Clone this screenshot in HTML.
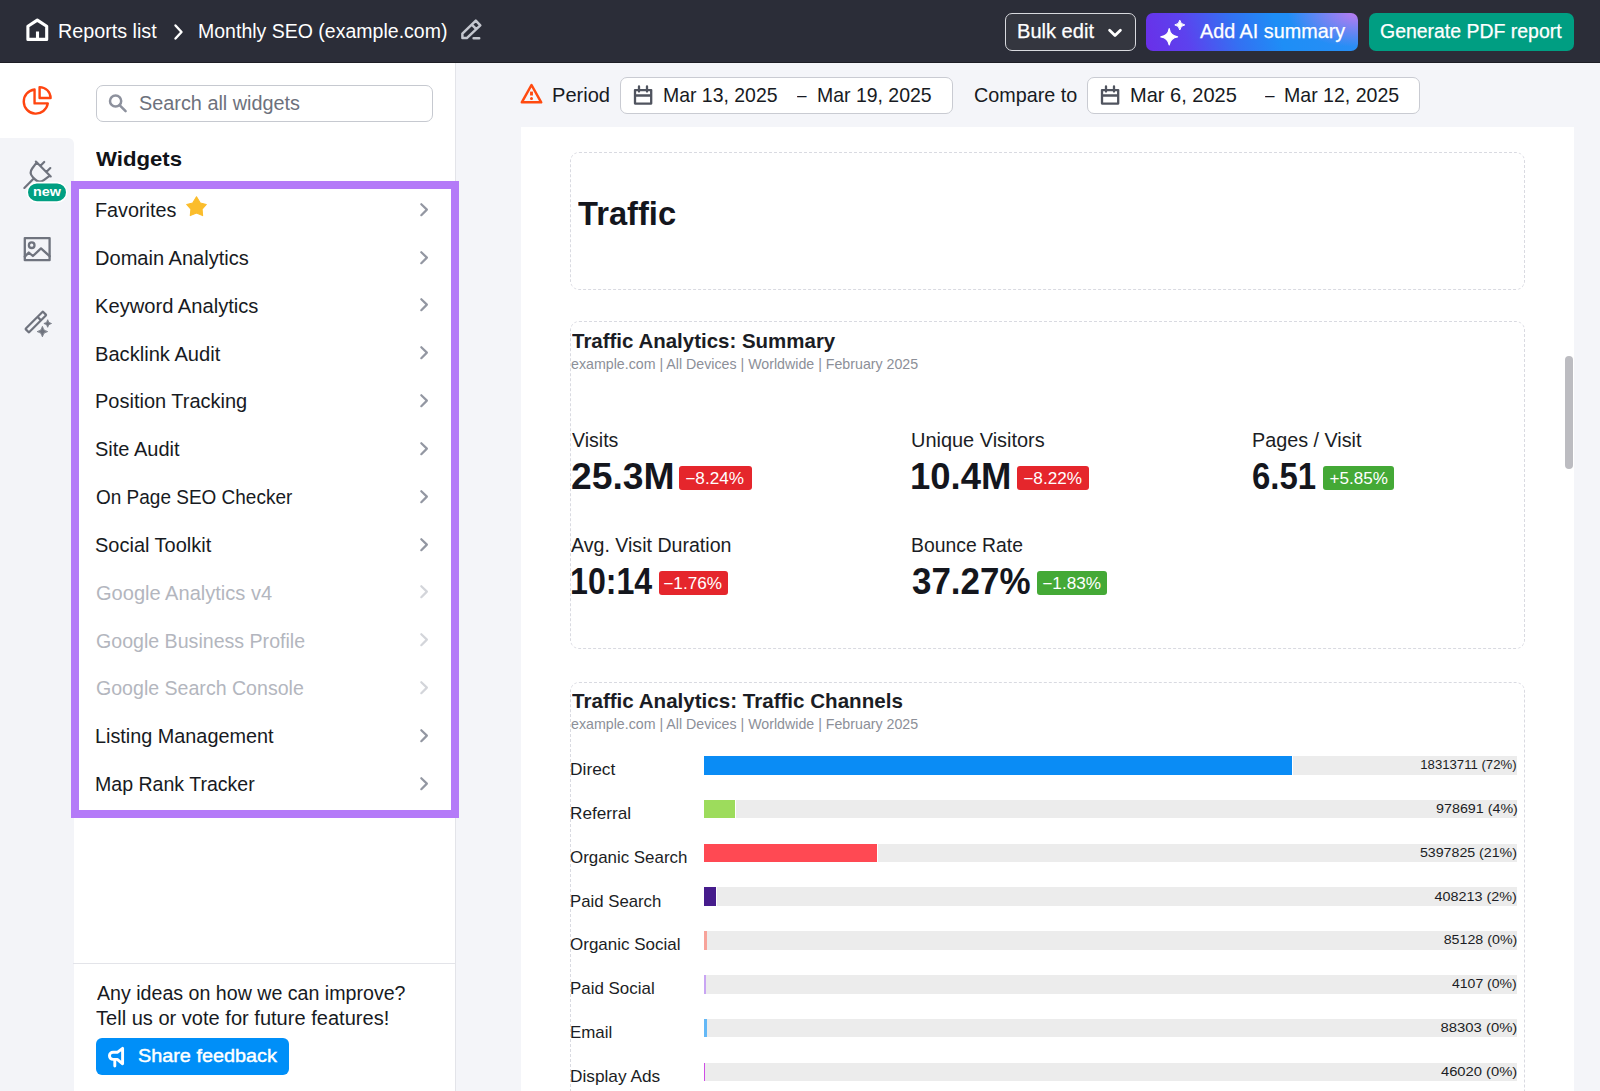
<!DOCTYPE html>
<html>
<head>
<meta charset="utf-8">
<style>
*{margin:0;padding:0;box-sizing:border-box;}
html,body{width:1600px;height:1091px;overflow:hidden;background:#f4f5f9;font-family:"Liberation Sans",sans-serif;color:#171a22;}
.a{position:absolute;}
.t{position:absolute;white-space:nowrap;line-height:1;}
</style>
</head>
<body>
<!-- HEADER -->
<div class="a" style="left:0;top:0;width:1600px;height:63px;background:#2b2d38;border-bottom:1.5px solid #1d1e25"></div>
<svg class="a" style="left:20px;top:14px" width="36" height="32" viewBox="0 0 36 32">
  <path d="M7.9 25.4V12.3L17.3 6.1l9.4 6.2v13.1z M17.5 25.4v-8" fill="none" stroke="#fff" stroke-width="3.1" stroke-linejoin="round"/>
</svg>
<svg class="a" style="left:172px;top:23px" width="14" height="18" viewBox="0 0 14 18">
  <path d="M3.5 2.5l6 6.5-6 6.5" fill="none" stroke="#fff" stroke-width="2.4" stroke-linecap="round" stroke-linejoin="round"/>
</svg>
<svg class="a" style="left:452px;top:12px" width="38" height="36" viewBox="0 0 38 36">
  <path d="M10.4 26.1V21.6L23.8 8.7L28.3 13.4L14.8 26.1Z M19.8 12.6L24.3 17.2 M21.6 26.2H27.2" fill="none" stroke="#c4c6ce" stroke-width="2.5" stroke-linejoin="round" stroke-linecap="round"/>
</svg>
<div class="a" style="left:1005px;top:13px;width:131px;height:38px;border:1.9px solid #d8d9de;border-radius:7px;background:#34363f"></div>
<svg class="a" style="left:1105px;top:24px" width="20" height="16" viewBox="0 0 20 16">
  <path d="M4.6 6.2l5.4 5.3 5.4-5.3" fill="none" stroke="#fff" stroke-width="2.8" stroke-linecap="round" stroke-linejoin="round"/>
</svg>
<div class="a" style="left:1146px;top:13px;width:212px;height:38px;border-radius:7px;background:radial-gradient(ellipse 70px 34px at 100% 0%,rgba(196,122,240,0.95),rgba(120,130,240,0) 100%),linear-gradient(72deg,#6a2fe8 0%,#5c42ee 20%,#3470f2 42%,#1e8ef6 62%,#2a8ef5 100%)"></div>
<svg class="a" style="left:1140px;top:8px" width="60" height="48" viewBox="1140 8 60 48">
  <path d="M1169.2 28.6Q1170.2 35.8 1177.6 36.8Q1170.2 37.8 1169.2 45Q1168.2 37.8 1160.8 36.8Q1168.2 35.8 1169.2 28.6z" fill="#fff" stroke="#fff" stroke-width="1.2" stroke-linejoin="round"/>
  <path d="M1179.8 20.2Q1180.4 24.3 1184.8 24.9Q1180.4 25.5 1179.8 30Q1179.2 25.5 1174.8 24.9Q1179.2 24.3 1179.8 20.2z" fill="#fff" stroke="#fff" stroke-width="1" stroke-linejoin="round"/>
</svg>
<div class="a" style="left:1369px;top:13px;width:205px;height:38px;border-radius:7px;background:#009e82"></div>

<!-- MAIN BG -->
<div class="a" style="left:456px;top:63px;width:1144px;height:1028px;background:#f4f5f9"></div>
<svg class="a" style="left:519px;top:81px" width="26" height="26" viewBox="0 0 26 26">
  <path d="M12.5 4L22.2 21.3H2.8z" fill="none" stroke="#ff4a10" stroke-width="2.5" stroke-linejoin="round"/>
  <path d="M12.5 10.6v3.9" stroke="#ff4a10" stroke-width="2.9"/>
  <circle cx="12.5" cy="17.6" r="1.5" fill="#ff4a10"/>
</svg>
<div class="a" style="left:620px;top:77px;width:332.5px;height:36.5px;border:1.3px solid #c9cbd2;border-radius:7px;background:#fff"></div>
<svg class="a" style="left:630.5px;top:83px" width="24" height="24" viewBox="0 0 24 24"><path d="M4 7.1h16.2v13.5H4z M4 12.5h16.2 M8 3.4v5.1 M16 3.4v5.1" fill="none" stroke="#50545f" stroke-width="2.3" stroke-linejoin="round" stroke-linecap="round"/></svg>
<div class="a" style="left:1087px;top:77px;width:332.5px;height:36.5px;border:1.3px solid #c9cbd2;border-radius:7px;background:#fff"></div>
<svg class="a" style="left:1098px;top:83px" width="24" height="24" viewBox="0 0 24 24"><path d="M4 7.1h16.2v13.5H4z M4 12.5h16.2 M8 3.4v5.1 M16 3.4v5.1" fill="none" stroke="#50545f" stroke-width="2.3" stroke-linejoin="round" stroke-linecap="round"/></svg>

<div class="a" style="left:521px;top:127px;width:1052.5px;height:964px;background:#fff"></div>
<div class="a" style="left:1564.7px;top:355.6px;width:8px;height:113px;border-radius:4px;background:#bcbcc1"></div>
<div class="a" style="left:570px;top:152px;width:954.5px;height:137.5px;border:1.3px dashed #d9dae1;border-radius:9px"></div>
<div class="a" style="left:570px;top:321px;width:954.5px;height:328px;border:1.3px dashed #d9dae1;border-radius:9px"></div>
<div class="a" style="left:570px;top:682px;width:954.5px;height:500px;border:1.3px dashed #d9dae1;border-radius:9px"></div>
<div class="a" style="left:679.2px;top:466.00px;width:72.4px;height:24.2px;border-radius:3px;background:#e5262c"></div>
<div class="a" style="left:1016.7px;top:466.00px;width:72.3px;height:24.2px;border-radius:3px;background:#e5262c"></div>
<div class="a" style="left:1322.9px;top:466.00px;width:71.1px;height:24.2px;border-radius:3px;background:#44a936"></div>
<div class="a" style="left:659px;top:571.30px;width:68.6px;height:24.2px;border-radius:3px;background:#e5262c"></div>
<div class="a" style="left:1037.2px;top:571.30px;width:69.4px;height:24.2px;border-radius:3px;background:#44a936"></div>
<div class="a" style="left:704px;top:756.00px;width:813px;height:18.5px;background:#ececec"></div>
<div class="a" style="left:703px;top:756.00px;width:589.9px;height:18.5px;background:#fff"></div>
<div class="a" style="left:704px;top:756.00px;width:587.9px;height:18.5px;background:#0a8cf5"></div>
<div class="a" style="left:704px;top:799.80px;width:813px;height:18.5px;background:#ececec"></div>
<div class="a" style="left:703px;top:799.80px;width:33.0px;height:18.5px;background:#fff"></div>
<div class="a" style="left:704px;top:799.80px;width:31.0px;height:18.5px;background:#9ddc5c"></div>
<div class="a" style="left:704px;top:843.60px;width:813px;height:18.5px;background:#ececec"></div>
<div class="a" style="left:703px;top:843.60px;width:174.9px;height:18.5px;background:#fff"></div>
<div class="a" style="left:704px;top:843.60px;width:172.9px;height:18.5px;background:#ff4953"></div>
<div class="a" style="left:704px;top:887.40px;width:813px;height:18.5px;background:#ececec"></div>
<div class="a" style="left:703px;top:887.40px;width:14.2px;height:18.5px;background:#fff"></div>
<div class="a" style="left:704px;top:887.40px;width:12.2px;height:18.5px;background:#461c8c"></div>
<div class="a" style="left:704px;top:931.20px;width:813px;height:18.5px;background:#ececec"></div>
<div class="a" style="left:704px;top:931.20px;width:2.5px;height:18.5px;background:#f7a39a"></div>
<div class="a" style="left:704px;top:975.00px;width:813px;height:18.5px;background:#ececec"></div>
<div class="a" style="left:704px;top:975.00px;width:1.5px;height:18.5px;background:#c9a5f3"></div>
<div class="a" style="left:704px;top:1018.80px;width:813px;height:18.5px;background:#ececec"></div>
<div class="a" style="left:704px;top:1018.80px;width:2.5px;height:18.5px;background:#64b8f6"></div>
<div class="a" style="left:704px;top:1062.60px;width:813px;height:18.5px;background:#ececec"></div>
<div class="a" style="left:704px;top:1062.60px;width:1.3px;height:18.5px;background:#cf4de6"></div>

<!-- SIDEBAR -->
<div class="a" style="left:0;top:63px;width:74px;height:100px;background:#fff"></div>
<div class="a" style="left:0;top:138px;width:74px;height:953px;background:#f3f4f8;border-top-right-radius:6px"></div>
<div class="a" style="left:74px;top:63px;width:382px;height:1028px;background:#fff;border-right:1px solid #e3e4e9"></div>

<svg class="a" style="left:20px;top:84px" width="34" height="34" viewBox="0 0 34 34">
  <path d="M14.55 5.5A12.1 12.1 0 1 0 27.8 19.4H14.55z" fill="none" stroke="#ff4510" stroke-width="2.4" stroke-linejoin="round"/>
  <path d="M19.6 3.1A10.95 10.95 0 0 1 30.6 14H19.6z" fill="none" stroke="#ff4510" stroke-width="2.4" stroke-linejoin="round"/>
</svg>
<!-- plug -->
<svg class="a" style="left:0;top:140px" width="74" height="70" viewBox="0 140 74 70">
  <g transform="translate(43.3 169) rotate(45)" fill="none" stroke="#6f737e" stroke-width="2.2" stroke-linecap="round" stroke-linejoin="round">
    <path d="M-10.5 0H10.5 M-4.3 0V-5.6 M4.3 0V-5.6 M-9.3 0L-8.2 7.5Q-7.4 13.2 -1.5 13.2H1.5Q7.4 13.2 8.2 7.5L9.3 0 M0 13.2V26.8"/>
  </g>
  <rect x="27.2" y="182.6" width="39.6" height="19.4" rx="9.7" fill="#009f82" stroke="#fff" stroke-width="1.6"/>
</svg>
<!-- image icon -->
<svg class="a" style="left:0;top:225px" width="74" height="45" viewBox="0 225 74 45">
  <g fill="none" stroke="#6f737e" stroke-width="2.3" stroke-linejoin="round" stroke-linecap="round">
    <rect x="24.8" y="238.1" width="24.8" height="22.1"/>
    <circle cx="31.7" cy="245.2" r="2.8"/>
    <path d="M24.8 256.6L28.8 252.5L32.9 256L41 248.4L49.6 256.2"/>
  </g>
</svg>
<!-- wand icon -->
<svg class="a" style="left:0;top:300px" width="74" height="45" viewBox="0 300 74 45">
  <g transform="translate(35.85 322) rotate(-45)" fill="none" stroke="#6f737e" stroke-width="2.2" stroke-linejoin="round">
    <rect x="-12.3" y="-2.45" width="24.6" height="4.9" rx="0.6"/>
    <path d="M4.8 -2.45V2.45"/>
  </g>
  <path d="M42.4 326.4Q43 331 47.6 331.6Q43 332.2 42.4 336.8Q41.8 332.2 37.2 331.6Q41.8 331 42.4 326.4z" fill="#6f737e" stroke="#6f737e" stroke-width="0.8" stroke-linejoin="round"/>
  <path d="M47.7 319.7Q48.1 323.1 51.5 323.5Q48.1 323.9 47.7 327.3Q47.3 323.9 43.9 323.5Q47.3 323.1 47.7 319.7z" fill="#6f737e" stroke="#6f737e" stroke-width="0.8" stroke-linejoin="round"/>
</svg>

<div class="a" style="left:96px;top:85px;width:337px;height:37px;border:1.3px solid #c6c9d0;border-radius:7px;background:#fff"></div>
<svg class="a" style="left:106px;top:92px" width="24" height="24" viewBox="0 0 24 24">
  <circle cx="9.6" cy="9.0" r="5.6" fill="none" stroke="#8d919d" stroke-width="2.5"/>
  <path d="M13.8 13.3l5.8 5.9" stroke="#8d919d" stroke-width="2.5" stroke-linecap="round"/>
</svg>
<div class="a" style="left:71px;top:180.5px;width:388px;height:637.5px;border:8px solid #b47af8"></div>
<svg class="a" style="left:414px;top:199.80px" width="20" height="20" viewBox="0 0 20 20"><path d="M7.3 4.2L12.9 9.6L7.3 15.2" fill="none" stroke="#9397a2" stroke-width="2.2" stroke-linecap="round" stroke-linejoin="round"/></svg>
<svg class="a" style="left:414px;top:247.63px" width="20" height="20" viewBox="0 0 20 20"><path d="M7.3 4.2L12.9 9.6L7.3 15.2" fill="none" stroke="#9397a2" stroke-width="2.2" stroke-linecap="round" stroke-linejoin="round"/></svg>
<svg class="a" style="left:414px;top:295.46px" width="20" height="20" viewBox="0 0 20 20"><path d="M7.3 4.2L12.9 9.6L7.3 15.2" fill="none" stroke="#9397a2" stroke-width="2.2" stroke-linecap="round" stroke-linejoin="round"/></svg>
<svg class="a" style="left:414px;top:343.29px" width="20" height="20" viewBox="0 0 20 20"><path d="M7.3 4.2L12.9 9.6L7.3 15.2" fill="none" stroke="#9397a2" stroke-width="2.2" stroke-linecap="round" stroke-linejoin="round"/></svg>
<svg class="a" style="left:414px;top:391.12px" width="20" height="20" viewBox="0 0 20 20"><path d="M7.3 4.2L12.9 9.6L7.3 15.2" fill="none" stroke="#9397a2" stroke-width="2.2" stroke-linecap="round" stroke-linejoin="round"/></svg>
<svg class="a" style="left:414px;top:438.95px" width="20" height="20" viewBox="0 0 20 20"><path d="M7.3 4.2L12.9 9.6L7.3 15.2" fill="none" stroke="#9397a2" stroke-width="2.2" stroke-linecap="round" stroke-linejoin="round"/></svg>
<svg class="a" style="left:414px;top:486.78px" width="20" height="20" viewBox="0 0 20 20"><path d="M7.3 4.2L12.9 9.6L7.3 15.2" fill="none" stroke="#9397a2" stroke-width="2.2" stroke-linecap="round" stroke-linejoin="round"/></svg>
<svg class="a" style="left:414px;top:534.61px" width="20" height="20" viewBox="0 0 20 20"><path d="M7.3 4.2L12.9 9.6L7.3 15.2" fill="none" stroke="#9397a2" stroke-width="2.2" stroke-linecap="round" stroke-linejoin="round"/></svg>
<svg class="a" style="left:414px;top:582.44px" width="20" height="20" viewBox="0 0 20 20"><path d="M7.3 4.2L12.9 9.6L7.3 15.2" fill="none" stroke="#d3d5da" stroke-width="2.2" stroke-linecap="round" stroke-linejoin="round"/></svg>
<svg class="a" style="left:414px;top:630.27px" width="20" height="20" viewBox="0 0 20 20"><path d="M7.3 4.2L12.9 9.6L7.3 15.2" fill="none" stroke="#d3d5da" stroke-width="2.2" stroke-linecap="round" stroke-linejoin="round"/></svg>
<svg class="a" style="left:414px;top:678.10px" width="20" height="20" viewBox="0 0 20 20"><path d="M7.3 4.2L12.9 9.6L7.3 15.2" fill="none" stroke="#d3d5da" stroke-width="2.2" stroke-linecap="round" stroke-linejoin="round"/></svg>
<svg class="a" style="left:414px;top:725.93px" width="20" height="20" viewBox="0 0 20 20"><path d="M7.3 4.2L12.9 9.6L7.3 15.2" fill="none" stroke="#9397a2" stroke-width="2.2" stroke-linecap="round" stroke-linejoin="round"/></svg>
<svg class="a" style="left:414px;top:773.76px" width="20" height="20" viewBox="0 0 20 20"><path d="M7.3 4.2L12.9 9.6L7.3 15.2" fill="none" stroke="#9397a2" stroke-width="2.2" stroke-linecap="round" stroke-linejoin="round"/></svg>
<svg class="a" style="left:178px;top:190px" width="36" height="32" viewBox="178 190 36 32">
  <path d="M196.5 196.8L200.3 203L206.3 204.5L202.1 209.2L202.6 215.6L196.5 213L190.3 215.6L190.9 209.2L186.7 204.5L192.7 203Z" fill="#fbbd2c" stroke="#fbbd2c" stroke-width="1.1" stroke-linejoin="round"/>
</svg>
<div class="a" style="left:73px;top:962.5px;width:382px;height:1.3px;background:#e3e4e9"></div>
<div class="a" style="left:95.5px;top:1038px;width:193.5px;height:37px;border-radius:6px;background:#008ff8"></div>
<svg class="a" style="left:100px;top:1040px" width="35" height="32" viewBox="100 1040 35 32">
  <path d="M122.6 1048.3V1063.8L117.3 1059.4H113A3.55 3.55 0 0 1 113 1052.3H117.3Z M114.8 1059.6V1066" fill="none" stroke="#fff" stroke-width="2.9" stroke-linejoin="round" stroke-linecap="round"/>
</svg>

<div class="t" id="t0" style="left:57.87px;top:21.58px;font-size:19.4px;color:#fff;transform:scaleX(1.0173);transform-origin:left top;">Reports list</div>
<div class="t" id="t1" style="left:197.96px;top:21.58px;font-size:19.4px;color:#fff;transform:scaleX(1.0063);transform-origin:left top;">Monthly SEO (example.com)</div>
<div class="t" id="t2" style="left:1016.63px;top:22.38px;font-size:19.4px;color:#fff;transform:scaleX(1.0348);transform-origin:left top;-webkit-text-stroke:0.25px #fff;">Bulk edit</div>
<div class="t" id="t3" style="left:1200.11px;top:22.38px;font-size:19.4px;color:#fff;transform:scaleX(1.0205);transform-origin:left top;-webkit-text-stroke:0.25px #fff;">Add AI summary</div>
<div class="t" id="t4" style="left:1380.48px;top:22.38px;font-size:19.4px;color:#fff;transform:scaleX(1.0029);transform-origin:left top;-webkit-text-stroke:0.25px #fff;">Generate PDF report</div>
<div class="t" id="t5" style="left:138.52px;top:93.58px;font-size:19.4px;color:#6d717c;transform:scaleX(1.0233);transform-origin:left top;">Search all widgets</div>
<div class="t" id="t6" style="left:96.32px;top:149.09px;font-size:20.8px;color:#111318;font-weight:700;transform:scaleX(1.0667);transform-origin:left top;">Widgets</div>
<div class="t" id="t7" style="left:95.38px;top:201.06px;font-size:19.3px;color:#171a22;transform:scaleX(1.0265);transform-origin:left top;">Favorites</div>
<div class="t" id="t8" style="left:95.36px;top:248.89px;font-size:19.3px;color:#171a22;transform:scaleX(1.0399);transform-origin:left top;">Domain Analytics</div>
<div class="t" id="t9" style="left:95.30px;top:296.72px;font-size:19.3px;color:#171a22;transform:scaleX(1.0445);transform-origin:left top;">Keyword Analytics</div>
<div class="t" id="t10" style="left:95.30px;top:344.55px;font-size:19.3px;color:#171a22;transform:scaleX(1.0433);transform-origin:left top;">Backlink Audit</div>
<div class="t" id="t11" style="left:95.37px;top:392.38px;font-size:19.3px;color:#171a22;transform:scaleX(1.0368);transform-origin:left top;">Position Tracking</div>
<div class="t" id="t12" style="left:95.38px;top:440.21px;font-size:19.3px;color:#171a22;transform:scaleX(1.0375);transform-origin:left top;">Site Audit</div>
<div class="t" id="t13" style="left:95.83px;top:488.04px;font-size:19.3px;color:#171a22;transform:scaleX(0.9847);transform-origin:left top;">On Page SEO Checker</div>
<div class="t" id="t14" style="left:95.38px;top:535.87px;font-size:19.3px;color:#171a22;transform:scaleX(1.0365);transform-origin:left top;">Social Toolkit</div>
<div class="t" id="t15" style="left:95.59px;top:583.70px;font-size:19.3px;color:#b3b6be;transform:scaleX(1.0398);transform-origin:left top;">Google Analytics v4</div>
<div class="t" id="t16" style="left:95.67px;top:631.53px;font-size:19.3px;color:#b3b6be;transform:scaleX(1.0161);transform-origin:left top;">Google Business Profile</div>
<div class="t" id="t17" style="left:95.67px;top:679.36px;font-size:19.3px;color:#b3b6be;transform:scaleX(1.0150);transform-origin:left top;">Google Search Console</div>
<div class="t" id="t18" style="left:95.16px;top:727.19px;font-size:19.3px;color:#171a22;transform:scaleX(1.0280);transform-origin:left top;">Listing Management</div>
<div class="t" id="t19" style="left:95.45px;top:775.02px;font-size:19.3px;color:#171a22;transform:scaleX(1.0140);transform-origin:left top;">Map Rank Tracker</div>
<div class="t" id="t20" style="left:96.61px;top:983.58px;font-size:19.4px;color:#171a22;transform:scaleX(1.0114);transform-origin:left top;">Any ideas on how we can improve?</div>
<div class="t" id="t21" style="left:96.13px;top:1009.48px;font-size:19.4px;color:#171a22;transform:scaleX(1.0345);transform-origin:left top;">Tell us or vote for future features!</div>
<div class="t" id="t22" style="left:137.77px;top:1046.15px;font-size:19.2px;color:#fff;transform:scaleX(1.0329);transform-origin:left top;-webkit-text-stroke:0.45px #fff;">Share feedback</div>
<div class="t" id="t23" style="left:32.69px;top:185.24px;font-size:13.6px;color:#fff;font-weight:700;transform:scaleX(1.0574);transform-origin:left top;">new</div>
<div class="t" id="t24" style="left:552.42px;top:86.04px;font-size:19.8px;color:#171a22;transform:scaleX(1.0144);transform-origin:left top;">Period</div>
<div class="t" id="t25" style="left:663.29px;top:86.04px;font-size:19.8px;color:#171a22;transform:scaleX(0.9823);transform-origin:left top;">Mar 13, 2025</div>
<div class="t" id="t26" style="left:797.34px;top:86.04px;font-size:19.8px;color:#171a22;transform:scaleX(0.8693);transform-origin:left top;">–</div>
<div class="t" id="t27" style="left:816.73px;top:86.04px;font-size:19.8px;color:#171a22;transform:scaleX(0.9837);transform-origin:left top;">Mar 19, 2025</div>
<div class="t" id="t28" style="left:973.69px;top:86.04px;font-size:19.8px;color:#171a22;transform:scaleX(0.9992);transform-origin:left top;">Compare to</div>
<div class="t" id="t29" style="left:1130.44px;top:86.04px;font-size:19.8px;color:#171a22;transform:scaleX(1.0115);transform-origin:left top;">Mar 6, 2025</div>
<div class="t" id="t30" style="left:1264.54px;top:86.04px;font-size:19.8px;color:#171a22;transform:scaleX(0.8693);transform-origin:left top;">–</div>
<div class="t" id="t31" style="left:1284.41px;top:86.04px;font-size:19.8px;color:#171a22;transform:scaleX(0.9885);transform-origin:left top;">Mar 12, 2025</div>
<div class="t" id="t32" style="left:578.30px;top:195.82px;font-size:34px;color:#14161d;font-weight:700;transform:scaleX(0.9614);transform-origin:left top;">Traffic</div>
<div class="t" id="t33" style="left:572.42px;top:330.56px;font-size:20.6px;color:#1b1d24;font-weight:700;transform:scaleX(0.9943);transform-origin:left top;">Traffic Analytics: Summary</div>
<div class="t" id="t34" style="left:571.38px;top:357.06px;font-size:14.1px;color:#8c8f98;transform:scaleX(1.0080);transform-origin:left top;">example.com | All Devices | Worldwide | February 2025</div>
<div class="t" id="t35" style="left:571.76px;top:430.96px;font-size:19.3px;color:#1b1d24;transform:scaleX(1.0145);transform-origin:left top;">Visits</div>
<div class="t" id="t36" style="left:570.73px;top:459.02px;font-size:36.6px;color:#14161d;font-weight:700;transform:scaleX(1.0195);transform-origin:left top;">25.3M</div>
<div class="t" id="t37" style="left:688.27px;top:471.19px;font-size:15.6px;color:#fff;transform:scaleX(1.0992);transform-origin:center top;">−8.24%</div>
<div class="t" id="t38" style="left:911.37px;top:430.96px;font-size:19.3px;color:#1b1d24;transform:scaleX(1.0340);transform-origin:left top;">Unique Visitors</div>
<div class="t" id="t39" style="left:910.33px;top:459.02px;font-size:36.6px;color:#14161d;font-weight:700;transform:scaleX(0.9967);transform-origin:left top;">10.4M</div>
<div class="t" id="t40" style="left:1025.98px;top:471.19px;font-size:15.6px;color:#fff;transform:scaleX(1.0992);transform-origin:center top;">−8.22%</div>
<div class="t" id="t41" style="left:1252.24px;top:430.96px;font-size:19.3px;color:#1b1d24;transform:scaleX(1.0251);transform-origin:left top;">Pages / Visit</div>
<div class="t" id="t42" style="left:1252.49px;top:459.02px;font-size:36.6px;color:#14161d;font-weight:700;transform:scaleX(0.9000);transform-origin:left top;">6.51</div>
<div class="t" id="t43" style="left:1331.71px;top:471.19px;font-size:15.6px;color:#fff;transform:scaleX(1.0944);transform-origin:center top;">+5.85%</div>
<div class="t" id="t44" style="left:571.36px;top:536.26px;font-size:19.3px;color:#1b1d24;transform:scaleX(1.0159);transform-origin:left top;">Avg. Visit Duration</div>
<div class="t" id="t45" style="left:569.83px;top:564.32px;font-size:36.6px;color:#14161d;font-weight:700;transform:scaleX(0.8792);transform-origin:left top;">10:14</div>
<div class="t" id="t46" style="left:666.19px;top:576.49px;font-size:15.6px;color:#fff;transform:scaleX(1.0992);transform-origin:center top;">−1.76%</div>
<div class="t" id="t47" style="left:911.14px;top:536.26px;font-size:19.3px;color:#1b1d24;transform:scaleX(1.0040);transform-origin:left top;">Bounce Rate</div>
<div class="t" id="t48" style="left:911.79px;top:564.32px;font-size:36.6px;color:#14161d;font-weight:700;transform:scaleX(0.9547);transform-origin:left top;">37.27%</div>
<div class="t" id="t49" style="left:1044.97px;top:576.49px;font-size:15.6px;color:#fff;transform:scaleX(1.0992);transform-origin:center top;">−1.83%</div>
<div class="t" id="t50" style="left:571.70px;top:691.06px;font-size:20.6px;color:#1b1d24;font-weight:700;transform:scaleX(0.9991);transform-origin:left top;">Traffic Analytics: Traffic Channels</div>
<div class="t" id="t51" style="left:571.38px;top:717.46px;font-size:14.1px;color:#8c8f98;transform:scaleX(1.0080);transform-origin:left top;">example.com | All Devices | Worldwide | February 2025</div>
<div class="t" id="t52" style="left:569.81px;top:761.12px;font-size:16.4px;color:#1b1d24;transform:scaleX(1.0581);transform-origin:left top;">Direct</div>
<div class="t" id="t53" style="left:1417.38px;top:758.24px;font-size:13.6px;color:#1b1d24;transform:scaleX(0.9673);transform-origin:right top;">18313711 (72%)</div>
<div class="t" id="t54" style="left:569.69px;top:804.92px;font-size:16.4px;color:#1b1d24;transform:scaleX(1.0475);transform-origin:left top;">Referral</div>
<div class="t" id="t55" style="left:1439.81px;top:802.04px;font-size:13.6px;color:#1b1d24;transform:scaleX(1.0507);transform-origin:right top;">978691 (4%)</div>
<div class="t" id="t56" style="left:570.35px;top:848.72px;font-size:16.4px;color:#1b1d24;transform:scaleX(1.0308);transform-origin:left top;">Organic Search</div>
<div class="t" id="t57" style="left:1424.38px;top:845.84px;font-size:13.6px;color:#1b1d24;transform:scaleX(1.0439);transform-origin:right top;">5397825 (21%)</div>
<div class="t" id="t58" style="left:569.75px;top:892.52px;font-size:16.4px;color:#1b1d24;transform:scaleX(1.0226);transform-origin:left top;">Paid Search</div>
<div class="t" id="t59" style="left:1439.29px;top:889.64px;font-size:13.6px;color:#1b1d24;transform:scaleX(1.0566);transform-origin:right top;">408213 (2%)</div>
<div class="t" id="t60" style="left:570.34px;top:936.32px;font-size:16.4px;color:#1b1d24;transform:scaleX(1.0367);transform-origin:left top;">Organic Social</div>
<div class="t" id="t61" style="left:1446.91px;top:933.44px;font-size:13.6px;color:#1b1d24;transform:scaleX(1.0468);transform-origin:right top;">85128 (0%)</div>
<div class="t" id="t62" style="left:569.83px;top:980.12px;font-size:16.4px;color:#1b1d24;transform:scaleX(1.0322);transform-origin:left top;">Paid Social</div>
<div class="t" id="t63" style="left:1454.46px;top:977.24px;font-size:13.6px;color:#1b1d24;transform:scaleX(1.0317);transform-origin:right top;">4107 (0%)</div>
<div class="t" id="t64" style="left:569.64px;top:1023.92px;font-size:16.4px;color:#1b1d24;transform:scaleX(1.0316);transform-origin:left top;">Email</div>
<div class="t" id="t65" style="left:1446.91px;top:1021.04px;font-size:13.6px;color:#1b1d24;transform:scaleX(1.0920);transform-origin:right top;">88303 (0%)</div>
<div class="t" id="t66" style="left:569.53px;top:1067.72px;font-size:16.4px;color:#1b1d24;transform:scaleX(1.0529);transform-origin:left top;">Display Ads</div>
<div class="t" id="t67" style="left:1446.93px;top:1064.84px;font-size:13.6px;color:#1b1d24;transform:scaleX(1.0865);transform-origin:right top;">46020 (0%)</div>
</body>
</html>
